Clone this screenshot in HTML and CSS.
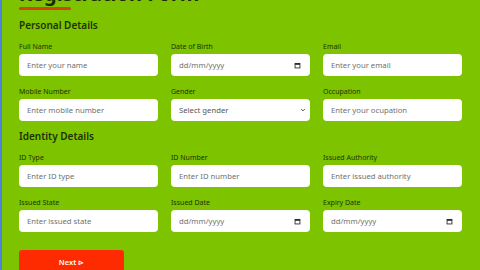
FILE: index.html
```html
<!DOCTYPE html>
<html lang="en-GB">
<head>
    <meta charset="UTF-8">
    <meta name="viewport" content="width=device-width, initial-scale=1.0">
    <title>Registration Form</title>
    <link rel="stylesheet" href="styles.css">
</head>
<body>
    <form class="form">
        <h1 class="title">Registration Form</h1>
        <div class="title-line"></div>

        <h2 class="section-title">Personal Details</h2>
        <div class="grid">
            <div class="field">
                <label>Full Name</label>
                <input type="text" placeholder="Enter your name">
            </div>
            <div class="field">
                <label>Date of Birth</label>
                <div class="date">
                    <span>dd/mm/yyyy</span>
                    <svg viewBox="0 0 10 10" class="cal-icon"><rect x="1.5" y="2" width="7" height="6.5" fill="none" stroke="#222" stroke-width="1.2"/><rect x="1.5" y="2" width="7" height="2" fill="#222"/></svg>
                </div>
            </div>
            <div class="field">
                <label>Email</label>
                <input type="email" placeholder="Enter your email">
            </div>
            <div class="field">
                <label>Mobile Number</label>
                <input type="text" placeholder="Enter mobile number">
            </div>
            <div class="field">
                <label>Gender</label>
                <div class="select-wrap">
                    <select class="select">
                        <option>Select gender</option>
                        <option>Male</option>
                        <option>Female</option>
                    </select>
                    <svg viewBox="0 0 10 10" class="chevron"><path d="M2 3.5L5 6.5L8 3.5" fill="none" stroke="#333" stroke-width="1.4"/></svg>
                </div>
            </div>
            <div class="field">
                <label>Occupation</label>
                <input type="text" placeholder="Enter your ocupation">
            </div>
        </div>

        <h2 class="section-title">Identity Details</h2>
        <div class="grid">
            <div class="field">
                <label>ID Type</label>
                <input type="text" placeholder="Enter ID type">
            </div>
            <div class="field">
                <label>ID Number</label>
                <input type="text" placeholder="Enter ID number">
            </div>
            <div class="field">
                <label>Issued Authority</label>
                <input type="text" placeholder="Enter issued authority">
            </div>
            <div class="field">
                <label>Issued State</label>
                <input type="text" placeholder="Enter issued state">
            </div>
            <div class="field">
                <label>Issued Date</label>
                <div class="date">
                    <span>dd/mm/yyyy</span>
                    <svg viewBox="0 0 10 10" class="cal-icon"><rect x="1.5" y="2" width="7" height="6.5" fill="none" stroke="#222" stroke-width="1.2"/><rect x="1.5" y="2" width="7" height="2" fill="#222"/></svg>
                </div>
            </div>
            <div class="field">
                <label>Expiry Date</label>
                <div class="date">
                    <span>dd/mm/yyyy</span>
                    <svg viewBox="0 0 10 10" class="cal-icon"><rect x="1.5" y="2" width="7" height="6.5" fill="none" stroke="#222" stroke-width="1.2"/><rect x="1.5" y="2" width="7" height="2" fill="#222"/></svg>
                </div>
            </div>
        </div>

        <button type="button" class="next">Next <span class="next-icon">&#8883;</span></button>
    </form>
</body>
</html>
```

FILE: styles.css
```css
/* Base styling */
body {
    font-family: 'Noto Sans', sans-serif;
    background-color: #7dc300;
    margin: 0;
    padding: 0;
    border-left: 2px solid #4a86d6;
    color: #1c3300;
    overflow: hidden;
}

.form {
    padding: 0 18px 0 17px;
    margin-top: -18px;
}

.title {
    font-size: 20px;
    line-height: 24px;
    font-weight: 700;
    margin: 0;
    color: #1c2a05;
}

.title-line {
    width: 52px;
    height: 3px;
    margin-top: 1px;
    background-color: #d4440e;
    border-radius: 2px;
}

.section-title {
    font-size: 10px;
    line-height: 13px;
    font-weight: 600;
    margin: 9px 0 11px;
    color: #1c3300;
}

.grid {
    display: grid;
    grid-template-columns: repeat(3, 139px);
    column-gap: 13px;
    row-gap: 12px;
}

.field label {
    display: block;
    font-size: 7px;
    line-height: 8px;
    margin-bottom: 3px;
    color: #1c3300;
}

.field input,
.select,
.date {
    display: block;
    box-sizing: border-box;
    width: 100%;
    height: 22px;
    border: none;
    border-radius: 4px;
    background-color: #fff;
    padding: 0 8px;
    font-family: 'Noto Sans', sans-serif;
    font-size: 7.7px;
    color: #333;
    outline: none;
}

.field input::placeholder {
    color: #707070;
}

.date {
    display: flex;
    align-items: center;
    justify-content: space-between;
    color: #707070;
}

.cal-icon {
    width: 7px;
    height: 7px;
    margin-right: 1px;
}

.select-wrap {
    position: relative;
}

.select {
    appearance: none;
    -webkit-appearance: none;
    color: #555;
}

.chevron {
    position: absolute;
    right: 4px;
    top: 8px;
    width: 6px;
    height: 6px;
}

.next {
    display: block;
    margin-top: 18px;
    width: 105px;
    height: 24px;
    border: none;
    border-radius: 3px;
    background-color: #ff2b00;
    color: #fff;
    font-family: 'Noto Sans', sans-serif;
    font-size: 7.5px;
    font-weight: 600;
    cursor: pointer;
}

.next-icon {
    font-size: 6.5px;
}
```
